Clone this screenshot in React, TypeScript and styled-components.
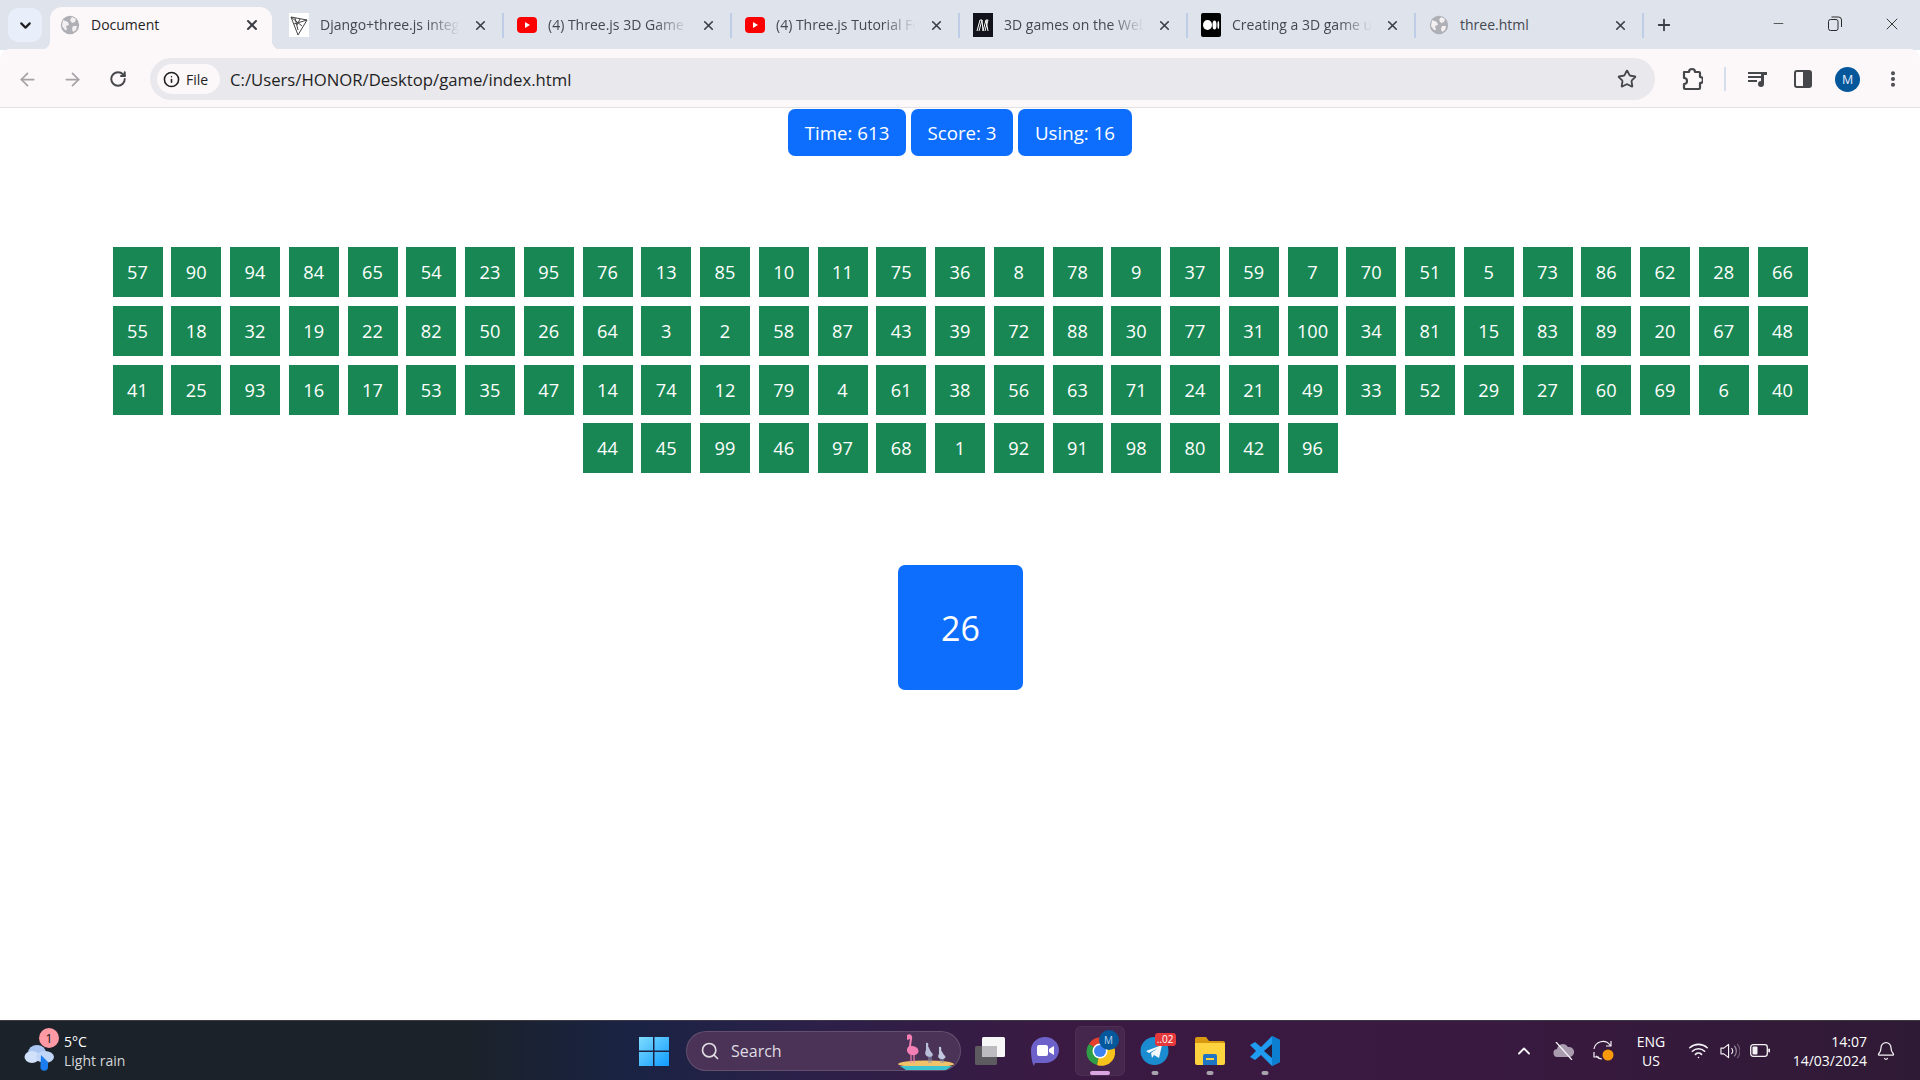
import styled, { createGlobalStyle } from "styled-components";
import {
  ArrowLeft,
  ArrowRight,
  Bell,
  ChevronDown,
  ChevronUp,
  EllipsisVertical,
  Info,
  Minus,
  Plus,
  RotateCw,
  Search,
  Star,
  Wifi,
  X,
} from "lucide-react";

const tileNumbers = [
  57, 90, 94, 84, 65, 54, 23, 95, 76, 13, 85, 10, 11, 75, 36, 8, 78, 9, 37, 59, 7, 70, 51, 5, 73, 86, 62, 28, 66,
  55, 18, 32, 19, 22, 82, 50, 26, 64, 3, 2, 58, 87, 43, 39, 72, 88, 30, 77, 31, 100, 34, 81, 15, 83, 89, 20, 67, 48,
  41, 25, 93, 16, 17, 53, 35, 47, 14, 74, 12, 79, 4, 61, 38, 56, 63, 71, 24, 21, 49, 33, 52, 29, 27, 60, 69, 6, 40,
  44, 45, 99, 46, 97, 68, 1, 92, 91, 98, 80, 42, 96,
];

const GlobalStyle = createGlobalStyle`
  html, body { margin: 0; padding: 0; background: #fff; }
  body { font-family: "Open Sans", "Noto Sans", sans-serif; overflow: hidden; }
`;

const Screen = styled.div`
  width: 1920px;
  height: 1080px;
  display: flex;
  flex-direction: column;
`;

const TabStrip = styled.div`
  height: 50px;
  flex: none;
  display: flex;
  align-items: flex-end;
  background: #dfe3ec;
  padding-left: 8px;
`;

const TabListButton = styled.div`
  width: 34px;
  height: 34px;
  margin-bottom: 8px;
  margin-right: 8px;
  border-radius: 10px;
  background: #e9eefb;
  display: flex;
  align-items: center;
  justify-content: center;
  color: #1f1f1f;
`;

const ActiveTab = styled.div`
  position: relative;
  width: 222px;
  height: 43px;
  margin-right: 4px;
  box-sizing: border-box;
  padding: 0 10px 7px 10px;
  display: flex;
  align-items: center;
  background: #fcf7f8;
  border-radius: 12px 12px 0 0;
  color: #1f1f1f;

  &::before,
  &::after {
    content: "";
    position: absolute;
    bottom: 0;
    width: 10px;
    height: 10px;
  }
  &::before {
    left: -10px;
    background: radial-gradient(circle at 0 0, transparent 10px, #fcf7f8 10.5px);
  }
  &::after {
    right: -10px;
    background: radial-gradient(circle at 100% 0, transparent 10px, #fcf7f8 10.5px);
  }
`;

const Tab = styled.div`
  width: 228px;
  height: 43px;
  box-sizing: border-box;
  padding: 0 14px 7px 13px;
  display: flex;
  align-items: center;
  color: #45484f;
  position: relative;
`;

const TabSeparator = styled.span`
  position: absolute;
  right: 0;
  top: 6px;
  width: 2px;
  height: 25px;
  background: #bfcde6;
`;

const Favicon = styled.span`
  width: 20px;
  height: 20px;
  flex: none;
  margin-right: 11px;
  display: flex;
  align-items: center;
  justify-content: center;
`;

const TabTitle = styled.span<{ $fade?: boolean }>`
  flex: 1;
  min-width: 0;
  overflow: hidden;
  white-space: nowrap;
  font-size: 14px;
  line-height: 20px;
  ${(p) => p.$fade && "margin-right: 10px; mask-image: linear-gradient(90deg, #000 76%, transparent 100%);"}
`;

const TabClose = styled.span`
  width: 20px;
  height: 20px;
  flex: none;
  display: flex;
  align-items: center;
  justify-content: center;
  color: #3b3e44;
`;

const NewTab = styled.div`
  width: 40px;
  height: 43px;
  padding-bottom: 7px;
  box-sizing: border-box;
  display: flex;
  align-items: center;
  justify-content: center;
  color: #3b3e44;
`;

const WindowControls = styled.div`
  margin-left: auto;
  height: 50px;
  padding-bottom: 3px;
  box-sizing: border-box;
  display: flex;
  align-items: center;
  color: #2a2a2c;
`;

const WindowButton = styled.div`
  width: 56.5px;
  display: flex;
  justify-content: center;
`;

const Toolbar = styled.div`
  height: 59px;
  flex: none;
  box-sizing: border-box;
  padding: 2px 0 0 5px;
  display: flex;
  align-items: center;
  background: #fcf7f8;
  border-bottom: 1px solid #e4e1e3;
  border-radius: 10px 10px 0 0;
  margin-top: -1px;
  position: relative;
`;

const ToolButton = styled.div<{ $muted?: boolean }>`
  width: 45px;
  height: 42px;
  flex: none;
  display: flex;
  align-items: center;
  justify-content: center;
  color: ${(p) => (p.$muted ? "#a3a3a6" : "#45474b")};
`;

const Omnibox = styled.div`
  width: 1505px;
  height: 42px;
  margin: 0 14px 0 10px;
  flex: none;
  box-sizing: border-box;
  padding: 0 18px 0 7px;
  display: flex;
  align-items: center;
  border-radius: 21px;
  background: #e9e8ec;
`;

const SiteChip = styled.div`
  width: 63px;
  height: 30px;
  flex: none;
  box-sizing: border-box;
  padding-left: 6px;
  display: flex;
  align-items: center;
  gap: 6px;
  border-radius: 15px;
  background: #fcf7f8;
  color: #1f1f1f;
  font-size: 14px;
`;

const UrlText = styled.span`
  flex: 1;
  margin-left: 10px;
  font-size: 16.7px;
  color: #1f1f1f;
`;

const ToolDivider = styled.span`
  width: 2px;
  height: 24px;
  flex: none;
  margin: 0 9px 0 10px;
  background: #d5dfee;
`;

const Avatar = styled.span`
  width: 25px;
  height: 25px;
  border-radius: 50%;
  background: #04579b;
  color: #e6eefc;
  font-size: 12.5px;
  display: flex;
  align-items: center;
  justify-content: center;
`;

const GamePage = styled.main`
  flex: 1;
  min-height: 0;
  padding-top: 1px;
  background: #fff;
  display: flex;
  flex-direction: column;
  align-items: center;
`;

const StatsRow = styled.div`
  display: flex;
  justify-content: center;
  gap: 5px;
`;

const StatBadge = styled.div<{ $width: number }>`
  width: ${(p) => p.$width}px;
  height: 47px;
  display: flex;
  align-items: center;
  justify-content: center;
  border-radius: 7px;
  background: #0d6efd;
  color: #fff;
  font-size: 18.7px;
`;

const TileGrid = styled.div`
  width: 1700px;
  margin-top: 91px;
  display: flex;
  flex-wrap: wrap;
  justify-content: center;
  gap: 8.75px;
`;

const Tile = styled.div`
  width: 50px;
  height: 50px;
  display: flex;
  align-items: center;
  justify-content: center;
  background: #198754;
  color: #fff;
  font-size: 18.2px;
`;

const TargetCard = styled.div`
  width: 125px;
  height: 125px;
  margin: 92px 0 0 1px;
  display: flex;
  align-items: center;
  justify-content: center;
  border-radius: 7px;
  background: #0d6efd;
  color: #fff;
  font-size: 34px;
`;

const Taskbar = styled.footer`
  height: 60px;
  flex: none;
  box-sizing: border-box;
  display: flex;
  align-items: center;
  border-top: 1px solid #3e3a44;
  background: linear-gradient(90deg, #1b2229 0%, #1b2229 24%, #1a2344 33%, #2c2049 42%, #3a1a42 55%, #3a1941 75%, #2f1a35 100%);
  color: #fff;
`;

const WeatherWidget = styled.div`
  width: 626.5px;
  flex: none;
  box-sizing: border-box;
  padding-left: 24px;
  display: flex;
  align-items: center;
  gap: 8px;
`;

const WeatherIcon = styled.div`
  position: relative;
  width: 32px;
  height: 40px;
  display: flex;
  align-items: flex-end;
`;

const AlertBadge = styled.span`
  position: absolute;
  left: 15px;
  top: -3px;
  width: 20px;
  height: 20px;
  border-radius: 50%;
  background: #ff99a4;
  color: #1a1a1a;
  font-size: 13px;
  line-height: 20px;
  text-align: center;
`;

const TwoLines = styled.div<{ $align?: string }>`
  display: flex;
  flex-direction: column;
  gap: 2px;
  font-size: 14px;
  line-height: 17px;
  text-align: ${(p) => p.$align ?? "left"};
`;

const Dim = styled.span`
  color: #d4d6d9;
`;

const TaskSlot = styled.div<{ $active?: boolean }>`
  position: relative;
  width: 50px;
  height: 50px;
  flex: none;
  margin: 0 2.5px;
  display: flex;
  align-items: center;
  justify-content: center;
  border-radius: 6px;
  ${(p) => p.$active && "background: rgba(255,255,255,0.06); box-shadow: inset 0 0 0 1px rgba(255,255,255,0.04);"}
`;

const RunDot = styled.span<{ $active?: boolean }>`
  position: absolute;
  bottom: 1px;
  left: 50%;
  transform: translateX(-50%);
  width: ${(p) => (p.$active ? 20 : 7)}px;
  height: 3.5px;
  border-radius: 2px;
  background: ${(p) => (p.$active ? "#dba6e4" : "#a8a3ad")};
`;

const SearchPill = styled.div`
  width: 275px;
  height: 40px;
  flex: none;
  margin: 0 1px 0 4.5px;
  box-sizing: border-box;
  padding-left: 13px;
  display: flex;
  align-items: center;
  gap: 11px;
  border-radius: 20px;
  border: 1px solid rgba(255, 255, 255, 0.14);
  background: #4b3357;
  color: #dfdce3;
  font-size: 16px;
  position: relative;
`;

const SearchArt = styled.span`
  position: absolute;
  right: 6px;
  bottom: 0;
  display: flex;
`;

const Tray = styled.div`
  flex: 1;
  display: flex;
  align-items: center;
  box-sizing: border-box;
  padding-left: 212px;
`;

const TrayIcon = styled.div<{ $width: number }>`
  width: ${(p) => p.$width}px;
  flex: none;
  display: flex;
  align-items: center;
  justify-content: center;
  color: #f4f2f5;
`;

const LangBox = styled(TwoLines)`
  width: 50px;
  flex: none;
  margin-left: 2px;
  align-items: center;
  font-size: 14px;
`;

const Clock = styled(TwoLines)`
  width: 80px;
  flex: none;
  margin-left: 7px;
  align-items: flex-end;
  font-size: 14px;
`;

function SmallGlobe() {
  return (
    <svg width="20" height="20" viewBox="0 0 20 20">
      <circle cx="10" cy="10" r="9.2" fill="#aeb0b6" />
      <path d="M3 5l5 2 1 3-3 1 1 4-2 0-3-4zM12 2l4 2-1 3-3 1-2-3zM13 11l4 0-1 4-3 2-1-3z" fill="#fcf7f8" opacity="0.9" />
    </svg>
  );
}

function YouTubeIcon() {
  return (
    <svg width="20" height="16" viewBox="0 0 20 16">
      <rect width="20" height="16" rx="4" fill="#f00" />
      <path d="M8 5l5 3-5 3z" fill="#fff" />
    </svg>
  );
}

function TriangleIcon() {
  return (
    <svg width="20" height="24" viewBox="0 0 20 24">
      <rect width="20" height="24" fill="#fff" />
      <path d="M2 4l16 3-9 15zM6 5l3 12M11 6l-3 6M2 4l11 9M18 7L5 11" fill="none" stroke="#444" strokeWidth="1" />
    </svg>
  );
}

function MdnIcon() {
  return (
    <svg width="20" height="24" viewBox="0 0 20 24">
      <rect width="20" height="24" fill="#12121a" />
      <path d="M4 18L7 7l2 0-3 11M10 18l3-11 2 0-3 11M9 7l1 11M13 7l2 11" fill="none" stroke="#fff" strokeWidth="1" />
    </svg>
  );
}

function MediumIcon() {
  return (
    <svg width="20" height="24" viewBox="0 0 20 24">
      <rect width="20" height="24" rx="2" fill="#000" />
      <ellipse cx="6.5" cy="12" rx="4.5" ry="5" fill="#fff" />
      <ellipse cx="13.5" cy="12" rx="2" ry="4.6" fill="#fff" />
      <ellipse cx="17.3" cy="12" rx="0.9" ry="4" fill="#fff" />
    </svg>
  );
}

function RestoreIcon() {
  return (
    <svg width="14" height="15" viewBox="0 0 14 15" fill="none" stroke="currentColor" strokeWidth="1">
      <rect x="0.5" y="3.5" width="9.5" height="11" rx="2" />
      <path d="M3.5 1h7a3 3 0 0 1 3 3v7" />
    </svg>
  );
}

function PuzzleIcon() {
  return (
    <svg width="22" height="24" viewBox="0 0 22 24" fill="none" stroke="#45474b" strokeWidth="2.2" strokeLinejoin="round">
      <path d="M3 5h5a3 3 0 0 1 6 0h4a1 1 0 0 1 1 1v4a3 3 0 0 1 0 6v5a1 1 0 0 1-1 1H4a1 1 0 0 1-1-1v-4a3 3 0 0 0 0-6V5z" />
    </svg>
  );
}

function MediaIcon() {
  return (
    <svg width="20" height="18" viewBox="0 0 20 18" fill="#45474b">
      <path d="M0 2h13v2H0zM0 6h13v2H0zM0 10h9v2H0z" />
      <path d="M13 2h6v3h-3v9a3 3 0 1 1-3-3z" />
    </svg>
  );
}

function SidePanelIcon() {
  return (
    <svg width="18" height="18" viewBox="0 0 18 18">
      <rect x="1" y="1" width="16" height="16" rx="2" fill="none" stroke="#45474b" strokeWidth="2" />
      <rect x="9" y="1" width="8" height="16" fill="#45474b" />
    </svg>
  );
}

function WeatherGlyph() {
  return (
    <svg width="32" height="30" viewBox="0 0 32 30">
      <ellipse cx="13" cy="12" rx="9" ry="8" fill="#a9c6f2" />
      <ellipse cx="8" cy="16" rx="7.5" ry="6" fill="#d2e1fb" />
      <ellipse cx="21" cy="16" rx="9" ry="6" fill="#c2d6f7" />
      <path d="M17 14l7 7v5a3.8 3.8 0 0 1-7.6 0z" fill="#1b7df0" />
    </svg>
  );
}

function StartIcon() {
  return (
    <svg width="30" height="30" viewBox="0 0 30 30">
      <defs>
        <linearGradient id="startFill" x1="0" y1="0" x2="1" y2="1">
          <stop offset="0" stopColor="#7fdcff" />
          <stop offset="1" stopColor="#0f9bff" />
        </linearGradient>
      </defs>
      <path d="M0 1h14v13.5H0zM15.5 1H30v13.5H15.5zM0 16h14v14H0zM15.5 16H30v14H15.5z" fill="url(#startFill)" />
    </svg>
  );
}

function FlamingoArt() {
  return (
    <svg width="58" height="36" viewBox="0 0 58 36">
      <ellipse cx="30" cy="30" rx="28" ry="3.5" fill="#f0c36a" />
      <path d="M4 32h52l-6 4H10z" fill="#3bc3cf" />
      <path d="M11 1c3-2 6 0 5 4l-1 7c5 0 9 3 7 7-2 3-8 3-10 0-2-3-1-5 1-7l1-7-3 1z" fill="#f37fb5" />
      <path d="M15 21v8M18 21v8" stroke="#f37fb5" strokeWidth="1.2" />
      <path d="M30 9c2-1 3 1 2 3l3 6c3 2 2 5-1 5-4 0-6-3-4-7z" fill="#b9bfd9" />
      <path d="M33 23v6M35 23v6" stroke="#8f94ad" strokeWidth="1" />
      <path d="M43 13c2-1 3 1 2 3l3 5c3 2 1 4-2 4-3 0-5-2-3-5z" fill="#c3c8df" />
      <path d="M45 25v4M47 25v4" stroke="#8f94ad" strokeWidth="1" />
    </svg>
  );
}

function TaskViewIcon() {
  return (
    <svg width="30" height="28" viewBox="0 0 30 28">
      <rect x="0" y="9" width="22" height="19" rx="1.5" fill="#5d5a60" />
      <rect x="7" y="0" width="23" height="20" rx="1.5" fill="#f7f7f8" />
      <rect x="7" y="9" width="15" height="11" fill="#bdbbbf" />
    </svg>
  );
}

function MeetIcon() {
  return (
    <svg width="28" height="30" viewBox="0 0 28 30">
      <path d="M14 1c8 0 14 6 14 13s-6 13-14 13H4l-1 3c-2-3-3-9-3-16C0 7 6 1 14 1z" fill="#6d62c9" />
      <rect x="6" y="9" width="11" height="11" rx="2" fill="#fff" />
      <path d="M18 13l5-3v9l-5-3z" fill="#fff" />
    </svg>
  );
}

function ChromeIcon() {
  return (
    <svg width="30" height="30" viewBox="0 0 30 30">
      <path d="M15 15L4 8a13.5 13.5 0 0 1 24 1z" fill="#e5402f" />
      <path d="M15 15l-11-7a13.5 13.5 0 0 0 8 21z" fill="#2f9e46" />
      <path d="M15 15L28 9a13.5 13.5 0 0 1-16 20z" fill="#f6c21c" />
      <circle cx="15" cy="15" r="7.5" fill="#fff" />
      <circle cx="15" cy="15" r="6" fill="#3d82f0" />
    </svg>
  );
}

const ProfileBadge = styled.span`
  position: absolute;
  right: 6px;
  top: 4px;
  width: 20px;
  height: 20px;
  border-radius: 50%;
  background: #04579b;
  color: #b9d3f2;
  font-size: 10px;
  line-height: 20px;
  text-align: center;
`;

function TelegramIcon() {
  return (
    <svg width="29" height="30" viewBox="0 0 29 30">
      <circle cx="14.5" cy="15" r="14" fill="#1b8cd0" />
      <path d="M6 15l16-6-3 13-5-3-2 3-1-5 7-5-9 5z" fill="#f4f8fb" />
    </svg>
  );
}

const CountBadge = styled.span`
  position: absolute;
  right: 4px;
  top: 7px;
  height: 13px;
  padding: 0 2px;
  border-radius: 3px;
  background: #e5383b;
  color: #fff;
  font-size: 10px;
  line-height: 13px;
`;

function FolderIcon() {
  return (
    <svg width="30" height="28" viewBox="0 0 30 28">
      <path d="M0 2a2 2 0 0 1 2-2h9l3 4h14a2 2 0 0 1 2 2v4H0z" fill="#d99a12" />
      <path d="M0 6h30v20a2 2 0 0 1-2 2H2a2 2 0 0 1-2-2z" fill="#ffd23f" />
      <path d="M8 19a2 2 0 0 1 2-2h10a2 2 0 0 1 2 2v9H8z" fill="#1f74c4" />
      <rect x="11" y="21" width="8" height="2" fill="#ffd23f" />
    </svg>
  );
}

function VsCodeIcon() {
  return (
    <svg width="30" height="30" viewBox="0 0 30 30">
      <path d="M22 0l8 4v22l-8 4-11-11-6 5-5-3 6-6-6-6 5-3 6 5z" fill="#1f9cf0" />
      <path d="M22 0l8 4v22l-8 4z" fill="#0d7fd1" />
      <path d="M22 8l-8 7 8 7z" fill="#2a1a3a" />
    </svg>
  );
}

function CloudOffIcon() {
  return (
    <svg width="22" height="18" viewBox="0 0 22 18">
      <path d="M5 15a4 4 0 0 1-1-8 6 6 0 0 1 11-2 5 5 0 0 1 2 10z" fill="#a99cae" />
      <path d="M3 0l16 18" stroke="#f4f2f5" strokeWidth="1.3" />
    </svg>
  );
}

function SyncIcon() {
  return (
    <svg width="24" height="24" viewBox="0 0 24 24" fill="none" stroke="#f4f2f5" strokeWidth="1.2">
      <path d="M2 10a9 9 0 0 1 16-4l1 1M19 2v5h-5" />
      <path d="M10 20a9 9 0 0 1-6-3M2 13v5h5" />
      <circle cx="16" cy="16" r="5.5" fill="#f89a0c" stroke="none" />
    </svg>
  );
}

function VolumeIcon() {
  return (
    <svg width="21" height="18" viewBox="0 0 21 18" fill="none" stroke="#f4f2f5" strokeWidth="1.2">
      <path d="M1 6h3l5-4v14l-5-4H1z" strokeLinejoin="round" />
      <path d="M12 6a4 4 0 0 1 0 6" />
      <path d="M15 3.500a8 8 0 0 1 0 11" opacity="0.55" />
      <path d="M18 1.500a11 11 0 0 1 0 15" opacity="0.3" />
    </svg>
  );
}

function BatteryIcon() {
  return (
    <svg width="20" height="13" viewBox="0 0 20 13">
      <rect x="0.7" y="0.7" width="16.600" height="11.600" rx="2.500" fill="none" stroke="#f4f2f5" strokeWidth="1.300" />
      <rect x="2.500" y="2.500" width="5" height="8" rx="1" fill="#f4f2f5" />
      <rect x="18.300" y="4.500" width="1.700" height="4" rx="0.800" fill="#f4f2f5" />
    </svg>
  );
}

const tabs = [
  { title: "Django+three.js integration", icon: <TriangleIcon /> },
  { title: "(4) Three.js 3D Game Tutorial", icon: <YouTubeIcon /> },
  { title: "(4) Three.js Tutorial For Absolute", icon: <YouTubeIcon /> },
  { title: "3D games on the Web - Game", icon: <MdnIcon /> },
  { title: "Creating a 3D game using", icon: <MediumIcon /> },
  { title: "three.html", icon: <SmallGlobe />, plain: true },
];

export default function App() {
  return (
    <Screen>
      <GlobalStyle />
      <TabStrip>
        <TabListButton>
          <ChevronDown size={17} strokeWidth={3} />
        </TabListButton>
        <ActiveTab>
          <Favicon>
            <SmallGlobe />
          </Favicon>
          <TabTitle>Document</TabTitle>
          <TabClose>
            <X size={16} strokeWidth={3} />
          </TabClose>
        </ActiveTab>
        {tabs.map((tab) => (
          <Tab key={tab.title}>
            <Favicon>{tab.icon}</Favicon>
            <TabTitle $fade={!tab.plain}>{tab.title}</TabTitle>
            <TabClose>
              <X size={15} strokeWidth={2.6} />
            </TabClose>
            <TabSeparator />
          </Tab>
        ))}
        <NewTab>
          <Plus size={18} strokeWidth={2.4} />
        </NewTab>
        <WindowControls>
          <WindowButton>
            <Minus size={15} strokeWidth={1.2} />
          </WindowButton>
          <WindowButton>
            <RestoreIcon />
          </WindowButton>
          <WindowButton>
            <X size={20} strokeWidth={1.1} />
          </WindowButton>
        </WindowControls>
      </TabStrip>
      <Toolbar>
        <ToolButton $muted>
          <ArrowLeft size={21} strokeWidth={2} />
        </ToolButton>
        <ToolButton $muted>
          <ArrowRight size={21} strokeWidth={2} />
        </ToolButton>
        <ToolButton>
          <RotateCw size={18} strokeWidth={2.6} />
        </ToolButton>
        <Omnibox>
          <SiteChip>
            <Info size={17} strokeWidth={2.2} />
            File
          </SiteChip>
          <UrlText>C:/Users/HONOR/Desktop/game/index.html</UrlText>
          <Star size={20} strokeWidth={2.2} color="#45474b" />
        </Omnibox>
        <ToolButton>
          <PuzzleIcon />
        </ToolButton>
        <ToolDivider />
        <ToolButton>
          <MediaIcon />
        </ToolButton>
        <ToolButton>
          <SidePanelIcon />
        </ToolButton>
        <ToolButton>
          <Avatar>M</Avatar>
        </ToolButton>
        <ToolButton>
          <EllipsisVertical size={20} strokeWidth={2.8} />
        </ToolButton>
      </Toolbar>
      <GamePage>
        <StatsRow>
          <StatBadge $width={118}>Time: 613</StatBadge>
          <StatBadge $width={102}>Score: 3</StatBadge>
          <StatBadge $width={114}>Using: 16</StatBadge>
        </StatsRow>
        <TileGrid>
          {tileNumbers.map((n) => (
            <Tile key={n}>{n}</Tile>
          ))}
        </TileGrid>
        <TargetCard>26</TargetCard>
      </GamePage>
      <Taskbar>
        <WeatherWidget>
          <WeatherIcon>
            <WeatherGlyph />
            <AlertBadge>1</AlertBadge>
          </WeatherIcon>
          <TwoLines>
            <span>5°C</span>
            <Dim>Light rain</Dim>
          </TwoLines>
        </WeatherWidget>
        <TaskSlot>
          <StartIcon />
        </TaskSlot>
        <SearchPill>
          <Search size={20} strokeWidth={2} />
          Search
          <SearchArt>
            <FlamingoArt />
          </SearchArt>
        </SearchPill>
        <TaskSlot>
          <TaskViewIcon />
        </TaskSlot>
        <TaskSlot>
          <MeetIcon />
        </TaskSlot>
        <TaskSlot $active>
          <ChromeIcon />
          <ProfileBadge>M</ProfileBadge>
          <RunDot $active />
        </TaskSlot>
        <TaskSlot>
          <TelegramIcon />
          <CountBadge>..02</CountBadge>
          <RunDot />
        </TaskSlot>
        <TaskSlot>
          <FolderIcon />
          <RunDot />
        </TaskSlot>
        <TaskSlot>
          <VsCodeIcon />
          <RunDot />
        </TaskSlot>
        <Tray>
          <TrayIcon $width={40}>
            <ChevronUp size={20} strokeWidth={2.2} />
          </TrayIcon>
          <TrayIcon $width={40}>
            <CloudOffIcon />
          </TrayIcon>
          <TrayIcon $width={40}>
            <SyncIcon />
          </TrayIcon>
          <LangBox $align="center">
            <span>ENG</span>
            <span>US</span>
          </LangBox>
          <TrayIcon $width={44}>
            <Wifi size={21} strokeWidth={1.8} />
          </TrayIcon>
          <TrayIcon $width={20}>
            <VolumeIcon />
          </TrayIcon>
          <TrayIcon $width={40}>
            <BatteryIcon />
          </TrayIcon>
          <Clock $align="right">
            <span>14:07</span>
            <span>14/03/2024</span>
          </Clock>
          <TrayIcon $width={38}>
            <Bell size={20} strokeWidth={1.5} />
          </TrayIcon>
        </Tray>
      </Taskbar>
    </Screen>
  );
}
